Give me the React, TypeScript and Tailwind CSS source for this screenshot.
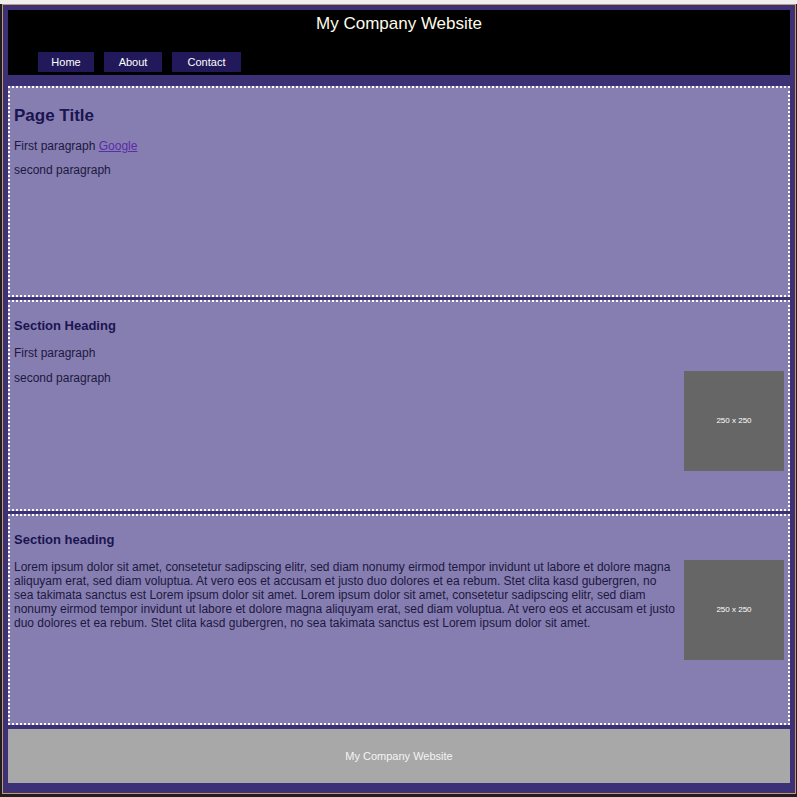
import React from "react";

const font = { fontFamily: '"Liberation Sans", Arial, sans-serif' };

function Placeholder() {
  return (
    <div className="float-right ml-2 flex h-[100px] w-[100px] items-center justify-center bg-[#666666] text-[8px] leading-none text-white" style={font}>
      250 x 250
    </div>
  );
}

export default function App() {
  const lorem =
    "Lorem ipsum dolor sit amet, consetetur sadipscing elitr, sed diam nonumy eirmod tempor invidunt ut labore et dolore magna aliquyam erat, sed diam voluptua. At vero eos et accusam et justo duo dolores et ea rebum. Stet clita kasd gubergren, no sea takimata sanctus est Lorem ipsum dolor sit amet. Lorem ipsum dolor sit amet, consetetur sadipscing elitr, sed diam nonumy eirmod tempor invidunt ut labore et dolore magna aliquyam erat, sed diam voluptua. At vero eos et accusam et justo duo dolores et ea rebum. Stet clita kasd gubergren, no sea takimata sanctus est Lorem ipsum dolor sit amet.";
  return (
    <div className="h-[797px] w-[797px] overflow-hidden bg-[#1e1e1e]" style={font}>
      <div className="h-[4px] w-full bg-[#eeeeee]" />
      <div className="ml-[2px] w-[794px] border border-[#c49a6c] bg-[#3c3176] px-[5px] pt-[5px] pb-[10px]">
        <header className="h-[65px] bg-black">
          <h1 className="text-center text-[17px] leading-[28px] text-[#fffbe8]">My Company Website</h1>
          <nav className="mt-[14px] flex gap-[10px] pl-[30px] text-[11px] text-white">
            <a className="flex h-[20px] w-[56px] items-center justify-center bg-[#22195a]">Home</a>
            <a className="flex h-[20px] w-[58px] items-center justify-center bg-[#22195a]">About</a>
            <a className="flex h-[20px] w-[69px] items-center justify-center bg-[#22195a]">Contact</a>
          </nav>
        </header>
        <main className="mt-[11px] flex flex-col gap-[3px]">
          <section className="h-[211px] border-2 border-dotted border-white bg-[#867eb0] px-[4px] text-[12px] text-[#1c1840]">
            <h2 className="mt-[16px] text-[17px] font-bold leading-[24px] text-[#1a1450]">Page Title</h2>
            <p className="mt-[11px] leading-[14px]">
              First paragraph <a className="text-[#5a2ca8] underline">Google</a>
            </p>
            <p className="mt-[10px] leading-[14px]">second paragraph</p>
          </section>
          <section className="h-[211px] border-2 border-dotted border-white bg-[#867eb0] px-[4px] text-[12px] text-[#1c1840]">
            <h2 className="mt-[15px] text-[13px] font-bold leading-[18px] text-[#1a1450]">Section Heading</h2>
            <div className="mt-[11px] leading-[14px]">
              <p>First paragraph</p>
              <div className="mt-[11px]">
                <Placeholder />
                <p>second paragraph</p>
              </div>
            </div>
          </section>
          <section className="h-[211px] border-2 border-dotted border-white bg-[#867eb0] px-[4px] text-[12px] text-[#1c1840]">
            <h2 className="mt-[15px] text-[13px] font-bold leading-[18px] text-[#1a1450]">Section heading</h2>
            <div className="mt-[13px] leading-[14px]">
              <div className="mt-[-2px]">
                <Placeholder />
              </div>
              <p className="mt-[0px]">{lorem}</p>
            </div>
          </section>
        </main>
        <footer className="mt-[4px] flex h-[54px] items-center justify-center bg-[#a8a8a8] text-[11px] text-[#f4f4f4]">
          My Company Website
        </footer>
      </div>
    </div>
  );
}
